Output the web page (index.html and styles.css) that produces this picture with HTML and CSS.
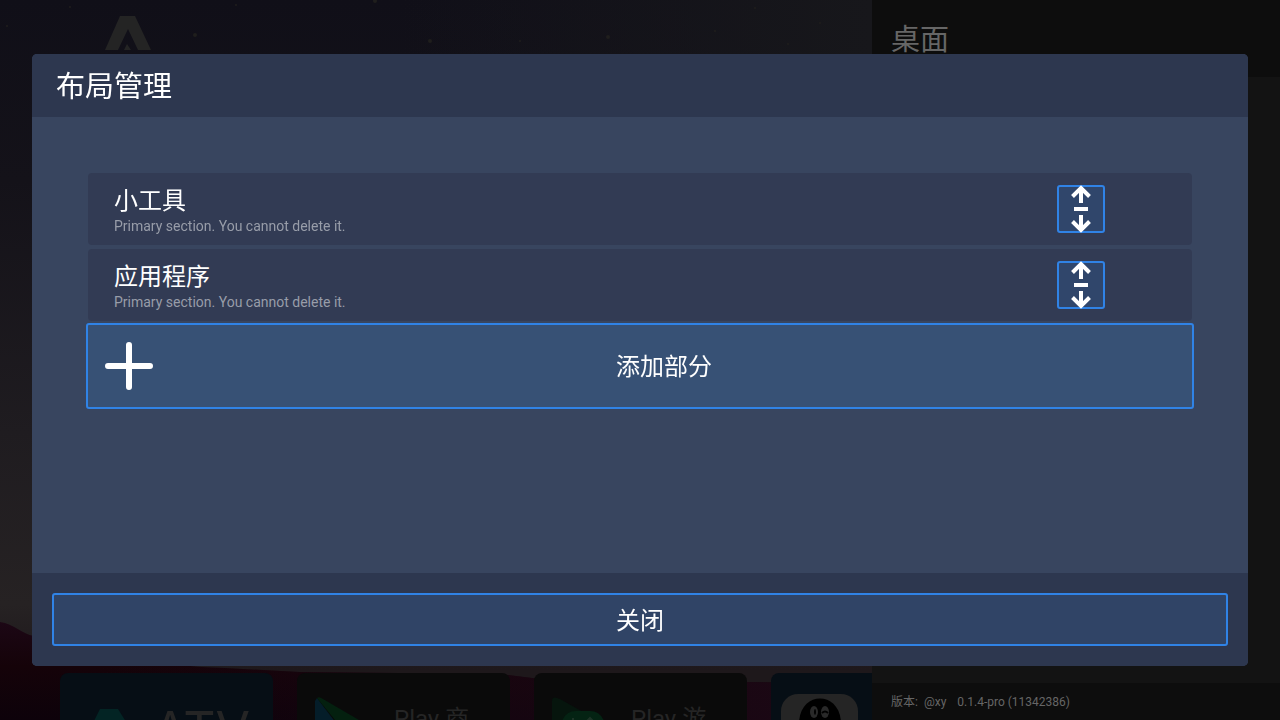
FILE: index.html
```html
<!DOCTYPE html>
<html lang="zh-CN">
<head>
<meta charset="utf-8">
<title>布局管理</title>
<link rel="stylesheet" href="styles.css">
</head>
<body>
<div class="screen">
  <main class="home">
    <svg class="scenery" viewBox="0 0 1280 720" preserveAspectRatio="none" aria-hidden="true">
      <defs>
        <linearGradient id="hill" x1="0" y1="0" x2="0" y2="1">
          <stop offset="0" stop-color="#1c0715"/><stop offset=".45" stop-color="#150309"/><stop offset="1" stop-color="#0d020a"/>
        </linearGradient>
        <linearGradient id="slope" x1="0" y1="0" x2="1" y2="0">
          <stop offset="0" stop-color="#1c0715" stop-opacity="0"/><stop offset="1" stop-color="#1c0815"/>
        </linearGradient>
        <linearGradient id="glow" x1="0" y1="0" x2="1" y2="0">
          <stop offset="0" stop-color="#17171b" stop-opacity="0"/><stop offset="1" stop-color="#17171b"/>
        </linearGradient>
      </defs>
      <rect x="400" width="472" height="60" fill="url(#glow)"/>
      <path fill="url(#hill)" d="M0 622C14 624 22 634 34 636C100 650 150 666 225 668L300 672L500 674L540 679L740 682L872 684V720H0Z"/>
      <path fill="url(#slope)" d="M100 660L225 668L300 672L500 674L540 679L740 682L872 684V720H100Z"/>
      <g fill="#1f1e1d">
        <circle cx="70" cy="7" r="1"/><circle cx="195" cy="35" r="2"/><circle cx="236" cy="5" r="1"/>
        <circle cx="7" cy="26" r="1"/><circle cx="375" cy="1" r="2"/><circle cx="430" cy="41" r="2"/>
        <circle cx="520" cy="41" r="1"/><circle cx="608" cy="37" r="2"/><circle cx="715" cy="31" r="1"/>
        <circle cx="755" cy="8" r="1"/><circle cx="788" cy="44" r="1"/><circle cx="820" cy="23" r="1"/>
      </g>
    </svg>
    <svg class="brand" viewBox="0 0 46 34" aria-hidden="true">
      <path fill="#242424" d="M15 0H30L46 34H33L23 13L13 34H0Z"/><path fill="#242424" d="M22 28L26 34H19Z"/>
    </svg>
    <div class="apps">
      <div class="app app-blue">
        <svg class="hex" viewBox="0 0 36 16" aria-hidden="true"><path fill="#032424" d="M8 0H26L36 16H0Z"/></svg>
        <span class="atv">ATV</span>
      </div>
      <div class="app">
        <svg class="play" viewBox="0 0 56 60" aria-hidden="true"><path fill="#041d29" d="M0 4V60L24 30L2 1Z"/><path fill="#04200f" d="M2 1Q4-1 8 2L56 30V40H34Z"/></svg>
        <span class="app-name">Play 商</span>
      </div>
      <div class="app">
        <svg class="play" viewBox="0 0 56 60" aria-hidden="true"><path fill="#06150d" d="M0 4Q0-2 8 2L40 20V60H0Z"/><path fill="#042313" d="M10 24Q14 14 24 14H38Q48 14 52 24V60H10Z"/><path stroke="#1c3326" stroke-width="2" fill="none" d="M21 21V29M34 25L38 21L42 25"/></svg>
        <span class="app-name">Play 游</span>
      </div>
      <div class="app app-blue app-last">
        <svg class="penguin" viewBox="0 0 77 60" aria-hidden="true"><rect width="77" height="80" rx="17" fill="#252525"/><path d="M18 30C18-4 60-4 60 30V60H18Z"/><ellipse cx="33" cy="18" rx="4" ry="6" fill="#292929"/><ellipse cx="44" cy="18" rx="4" ry="6" fill="#292929"/><ellipse cx="34" cy="18" rx="1" ry="3"/><path stroke="#000" stroke-width="2" fill="none" d="M41 19Q44 16 47 19"/></svg>
      </div>
    </div>
  </main>
  <aside class="side">
    <header class="side-head">桌面</header>
    <footer class="side-foot"><span>版本:</span><span>@xy</span><span class="version">0.1.4-pro (11342386)</span></footer>
  </aside>
</div>

<div class="overlay">
  <section class="dialog" role="dialog" aria-labelledby="title">
    <h1 class="dialog-title" id="title">布局管理</h1>
    <div class="dialog-body">
      <div class="row">
        <div class="row-text">
          <h2 class="row-name">小工具</h2>
          <p class="row-note">Primary section. You cannot delete it.</p>
        </div>
        <button class="move" aria-label="移动 小工具">
          <svg viewBox="0 0 48 48" aria-hidden="true"><path d="M24 18V3M15.500 11.500L24 3L32.500 11.500M17 24H31M24 30V45M15.500 36.500L24 45L32.500 36.500"/></svg>
        </button>
      </div>
      <div class="row">
        <div class="row-text">
          <h2 class="row-name">应用程序</h2>
          <p class="row-note">Primary section. You cannot delete it.</p>
        </div>
        <button class="move" aria-label="移动 应用程序">
          <svg viewBox="0 0 48 48" aria-hidden="true"><path d="M24 18V3M15.500 11.500L24 3L32.500 11.500M17 24H31M24 30V45M15.500 36.500L24 45L32.500 36.500"/></svg>
        </button>
      </div>
      <button class="add">
        <svg class="plus" viewBox="0 0 48 48" aria-hidden="true"><path d="M24 3V45M3 24H45"/></svg>
        <span class="add-label">添加部分</span>
      </button>
    </div>
    <footer class="dialog-foot"><button class="close">关闭</button></footer>
  </section>
</div>
</body>
</html>
```
FILE: styles.css
```css
* { box-sizing: border-box; margin: 0; padding: 0; }

body {
  font-family: Roboto, "Noto Sans CJK SC", sans-serif;
  background: #121116;
  color: #fff;
}

button { font: inherit; color: inherit; cursor: pointer; }

.screen {
  display: flex;
  height: 100vh;
  overflow: hidden;
}

.home {
  position: relative;
  flex: 1;
  min-width: 0;
  display: flex;
  flex-direction: column;
  justify-content: space-between;
  background: linear-gradient(#100f18, #141219 25%, #1f1c20 60%, #262223 84%, #1e181b 93%);
  overflow: hidden;
}

.scenery {
  position: absolute;
  top: 0;
  left: 0;
  width: 100vw;
  height: 100%;
}

.brand { position: relative; width: 46px; height: 34px; margin: 16px 0 0 105px; }

.apps {
  position: relative;
  display: flex;
  gap: 24px;
  height: 47px;
  padding-left: 60px;
}

.app {
  flex: none;
  display: flex;
  align-items: flex-start;
  width: 213px;
  padding: 24px 18px 0;
  border-radius: 8px 8px 0 0;
  background: #0a0a0a;
  color: #252525;
  overflow: hidden;
}

.app-blue { background: #060e15; }
.app-last { padding: 21px 10px 0; }
.hex { flex: none; width: 36px; height: 16px; margin: 12px 25px 0 14px; }
.atv { font: 400 50px/48px Inter, sans-serif; margin-top: 9px; }
.play { flex: none; width: 56px; height: 60px; margin-right: 23px; }
.app-name { font-size: 24px; line-height: 32px; margin-top: 6px; white-space: nowrap; }
.penguin { flex: none; width: 77px; height: 60px; }

.side {
  position: relative;
  width: 408px;
  display: flex;
  flex-direction: column;
  justify-content: space-between;
  background: #131313;
}

.side-head {
  height: 77px;
  padding: 0 19px;
  background: #0d0d0d;
  color: #666;
  font-size: 29px;
  line-height: 80px;
}

.side-foot {
  display: flex;
  gap: 6px;
  height: 37px;
  padding: 0 19px;
  background: #0d0d0d;
  color: #666;
  font-size: 12px;
  line-height: 39px;
}

.version { margin-left: 5px; }

.overlay {
  position: fixed;
  inset: 0;
  display: flex;
  padding: 54px 32px;
}

.dialog {
  flex: 1;
  display: flex;
  flex-direction: column;
  border-radius: 5px;
  background: #38455f;
  overflow: hidden;
}

.dialog-title {
  padding: 4px 24px 0;
  background: #2d374f;
  font-size: 29px;
  font-weight: 400;
  line-height: 59px;
}

.dialog-body {
  flex: 1;
  display: flex;
  flex-direction: column;
  gap: 4px;
  padding: 56px;
}

.row {
  display: flex;
  align-items: center;
  justify-content: space-between;
  height: 72px;
  padding: 0 87px 0 26px;
  border-radius: 4px;
  background: #323b54;
}

.row-text { padding-top: 2px; }
.row-name { font-size: 24px; font-weight: 400; line-height: 32px; }
.row-note { color: #989da9; font-size: 14px; line-height: 18px; }

.move {
  width: 48px;
  height: 48px;
  border: 2px solid #3083e6;
  border-radius: 3px;
  background: #30466b;
}

.move svg { display: block; width: 48px; height: 48px; margin: -2px; fill: none; stroke: #fff; stroke-width: 4; }

.add {
  display: flex;
  align-items: center;
  height: 86px;
  margin: -2px -2px 0;
  padding: 0 17px;
  border: 2px solid #3083e6;
  border-radius: 3px;
  background: #375175;
  font-size: 24px;
}

.plus { width: 48px; height: 48px; fill: none; stroke: #fff; stroke-width: 6; stroke-linecap: round; }
.add-label { flex: 1; padding-bottom: 4px; text-align: center; }

.dialog-foot { padding: 20px; background: #2d374f; }

.close {
  display: block;
  width: 100%;
  height: 53px;
  padding-bottom: 2px;
  border: 2px solid #3083e6;
  border-radius: 3px;
  background: #304466;
  font-size: 24px;
}
```
